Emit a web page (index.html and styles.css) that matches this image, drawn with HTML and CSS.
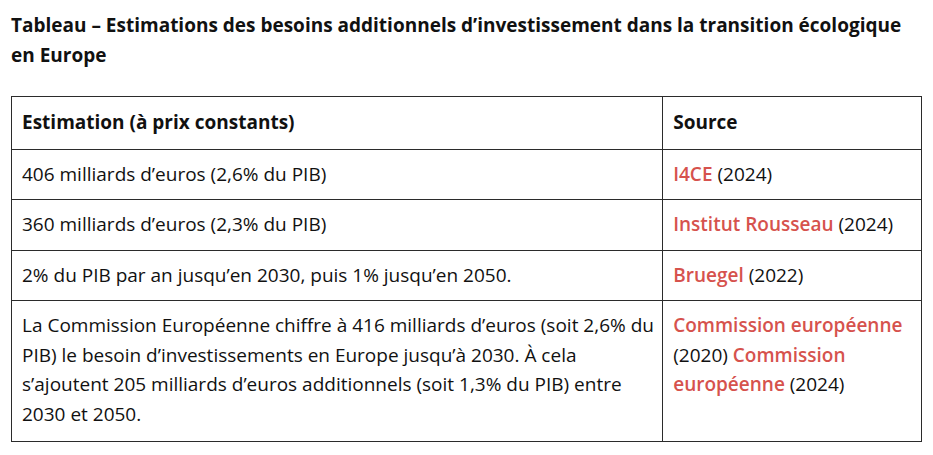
FILE: index.html
```html
<!DOCTYPE html>
<html lang="fr">
<head>
<meta charset="utf-8">
<title>Tableau</title>
<link rel="stylesheet" href="styles.css">
</head>
<body>
<div class="page">
  <h3 class="title">Tableau – Estimations des besoins additionnels d’investissement dans la transition écologique en Europe</h3>
  <table class="data">
    <colgroup><col class="c1"><col class="c2"></colgroup>
    <thead>
      <tr><th>Estimation (à prix constants)</th><th>Source</th></tr>
    </thead>
    <tbody>
      <tr><td>406 milliards d’euros (2,6% du PIB)</td><td><a href="#">I4CE</a> (2024)</td></tr>
      <tr><td>360 milliards d’euros (2,3% du PIB)</td><td><a href="#">Institut Rousseau</a> (2024)</td></tr>
      <tr><td>2% du PIB par an jusqu’en 2030, puis 1% jusqu’en 2050.</td><td><a href="#">Bruegel</a> (2022)</td></tr>
      <tr class="tall"><td>La Commission Européenne chiffre à 416 milliards d’euros (soit 2,6% du PIB) le besoin d’investissements en Europe jusqu’à 2030. À cela s’ajoutent 205 milliards d’euros additionnels (soit 1,3% du PIB) entre 2030 et 2050.</td><td><a href="#">Commission européenne</a> (2020) <a href="#">Commission européenne</a> (2024)</td></tr>
    </tbody>
  </table>
</div>
</body>
</html>
```

FILE: styles.css
```css
html, body {
  margin: 0;
  padding: 0;
  background: #fff;
}
body {
  font-family: "Open Sans", "DejaVu Sans", sans-serif;
  color: #111;
}
.page {
  padding: 10px 11px 0 11px;
}
.title {
  margin: 0 0 26px 0;
  font-size: 19px;
  line-height: 30px;
  font-weight: 700;
  width: 900px;
}
.data {
  border-collapse: collapse;
  width: 911px;
  font-size: 19px;
  line-height: 29.5px;
}
.c1 { width: 652px; }
.c2 { width: 259px; }
.data th, .data td {
  border: 1.5px solid #2b2b2b;
  padding: 10px 4px 10px 10px;
  text-align: left;
  vertical-align: top;
}
.data th {
  font-weight: 700;
  padding-top: 11px;
  padding-bottom: 11px;
}
.data a {
  color: #d6524d;
  font-weight: 600;
  text-decoration: none;
}
.tall td {
  padding-bottom: 12px;
}
```
